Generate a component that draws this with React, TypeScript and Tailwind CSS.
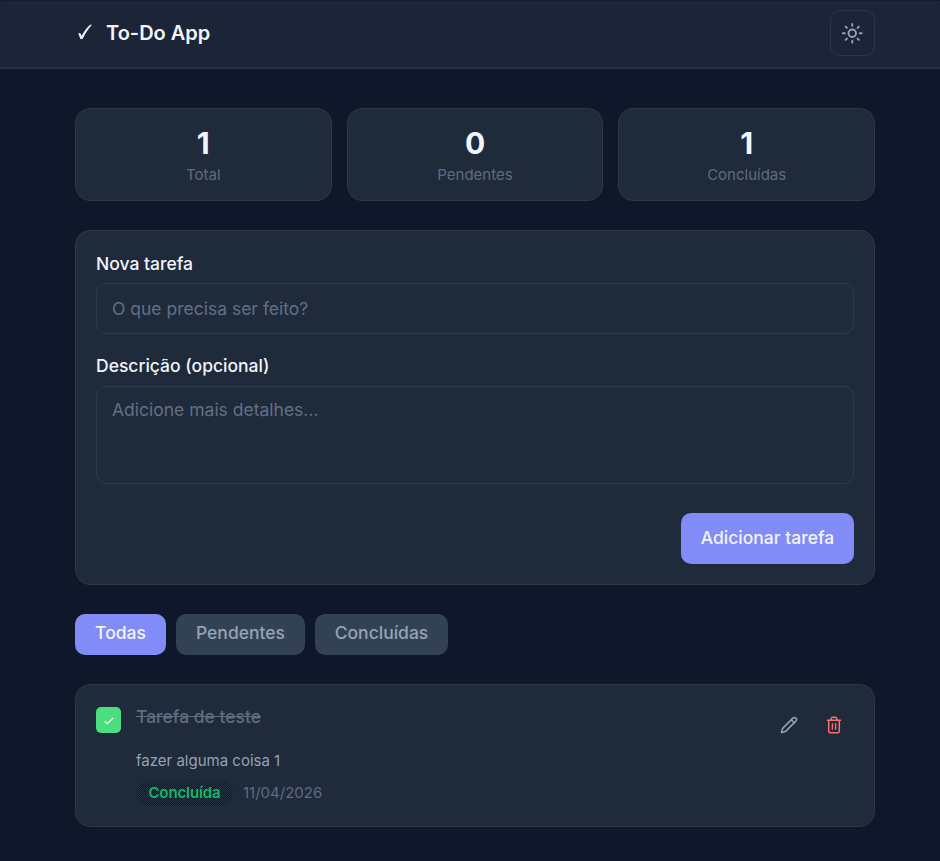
import React, { useState } from "react";
import { Pencil, Sun } from "lucide-react";

type Filter = "all" | "pending" | "done";

type Task = {
  id: number;
  title: string;
  description: string;
  date: string;
  done: boolean;
};

const initialTasks: Task[] = [
  {
    id: 1,
    title: "Tarefa de teste",
    description: "fazer alguma coisa 1",
    date: "11/04/2026",
    done: true,
  },
];

const filters: { id: Filter; label: string; width: string }[] = [
  { id: "all", label: "Todas", width: "w-[91px]" },
  { id: "pending", label: "Pendentes", width: "w-[129px]" },
  { id: "done", label: "Concluídas", width: "w-[133px]" },
];

function TrashIcon() {
  return (
    <svg
      viewBox="0 0 18 18"
      className="h-[18px] w-[18px]"
      fill="none"
      stroke="currentColor"
      strokeWidth="1.5"
      strokeLinecap="round"
      strokeLinejoin="round"
    >
      <path d="M2.500 4.200h13M3.700 4.200v11.100c0 .9.600 1.500 1.500 1.500h7.600c.9 0 1.500-.6 1.500-1.500V4.200" />
      <path d="M5.900 4.200l.6-2.100c.2-.6.600-.9 1.200-.9h2.600c.6 0 1 .3 1.200.9l.6 2.100" />
      <path d="M7.400 7.700v5.600M10.600 7.700v5.600" strokeWidth="1.400" />
    </svg>
  );
}

function Header() {
  return (
    <header className="h-[69px] border-t border-b-2 border-t-[#0f172a] border-b-[#243044] bg-[#1c2537] [border-top-style:dotted]">
      <div className="ml-[75px] flex h-[64px] w-[800px] items-center justify-between">
        <h1 className="flex items-center text-[20px] font-semibold leading-[30px]">
          <svg viewBox="0 0 16 18" className="mr-[13px] mb-[2px] ml-[2px] h-[18px] w-[16px]">
            <path
              d="M1.300 10.500c1.100-.8 2-.7 2.500.4l.8 2C6.900 8.600 9.700 4.700 13 1.700h1.900C11.300 5.900 8.200 10.600 5.900 15.400c-.7.8-1.600.9-2.500.7z"
              fill="currentColor"
            />
          </svg>
          To-Do App
        </h1>
        <button
          type="button"
          aria-label="Alternar tema"
          className="flex h-[46px] w-[45px] items-center justify-center rounded-[10px] border border-[#2a374a] text-[#94a3b8]"
        >
          <Sun size={22.5} strokeWidth={2} />
        </button>
      </div>
    </header>
  );
}

function StatCard({ value, label }: { value: number; label: string }) {
  return (
    <div className="flex h-[93px] flex-col items-center rounded-[15px] border border-[#2c394b] bg-[#1f2a3b] pt-4">
      <span className="text-[30px] font-bold leading-[37px]">{value}</span>
      <span className="mt-[2px] text-[15px] leading-[22px] text-[#5e6c80]">{label}</span>
    </div>
  );
}

function TaskForm() {
  return (
    <form
      onSubmit={(e) => e.preventDefault()}
      className="mt-[29px] flex h-[355px] flex-col rounded-[15px] border border-[#2c394b] bg-[#1f2a3b] px-5 pt-[21px]"
    >
      <label htmlFor="title" className="text-[17.5px] font-medium leading-[24px]">
        Nova tarefa
      </label>
      <input
        id="title"
        placeholder="O que precisa ser feito?"
        className="mt-[7px] h-[51px] rounded-[10px] border border-[#2e3b4e] px-[15px] text-[17.5px] outline-none placeholder:text-[#627085]"
      />
      <label htmlFor="description" className="mt-5 text-[17.5px] font-medium leading-[24px]">
        Descrição (opcional)
      </label>
      <textarea
        id="description"
        placeholder="Adicione mais detalhes..."
        className="mt-2 h-[98px] resize-none rounded-[10px] border border-[#2e3b4e] px-[15px] pt-[10px] text-[17.5px] leading-[26px] outline-none placeholder:text-[#627085]"
      />
      <button
        type="submit"
        className="mt-[29px] h-[51px] w-[173px] self-end rounded-[10px] bg-[#818cf8] pb-px text-[17.5px] font-medium"
      >
        Adicionar tarefa
      </button>
    </form>
  );
}

function TaskItem({ task, onToggle }: { task: Task; onToggle: () => void }) {
  return (
    <li className="flex h-[143px] rounded-[15px] border border-[#2c394b] bg-[#1f2a3b] px-5">
      <button
        type="button"
        onClick={onToggle}
        aria-label="Concluir tarefa"
        className={`mt-[22px] flex h-[26px] w-[25px] items-center justify-center rounded-[5px] ${task.done ? "bg-[#4ade80]" : "border border-[#334155]"}`}
      >
        {task.done && (
          <svg viewBox="0 0 10 8" className="mt-px h-2 w-2.5" fill="none">
            <path d="M.8 4.300l2.500 2.500L9.200.9" stroke="#f1f5f9" strokeWidth="1.25" />
          </svg>
        )}
      </button>

      <div className="ml-[15px] flex-1 pt-[19px]">
        <h3
          className={`text-[17.5px] font-medium leading-[26px] ${task.done ? "text-[#5e6c80] line-through" : ""}`}
        >
          {task.title}
        </h3>
        <p className="mt-[19px] text-[15px] leading-[23px] text-[#94a3b8]">
          {task.description}
        </p>
        <div className="mt-2 flex items-center">
          <span className="flex h-[26px] w-[97px] items-center justify-center rounded-full bg-[repeating-conic-gradient(#0f1929_0%_25%,#273446_0%_50%)] bg-[length:2px_2px] text-[15px] font-semibold leading-[24px] tracking-[-0.1px] text-[#10b962]">
            Concluída
          </span>
          <span className="ml-[10px] pb-px text-[15px] leading-[23px] text-[#5e6c80]">
            {task.date}
          </span>
        </div>
      </div>

      <div className="mr-[11px] flex gap-[27px] pt-[31px]">
        <button type="button" aria-label="Editar" className="h-[18px] text-[#94a3b8]">
          <Pencil size={18} strokeWidth={2} />
        </button>
        <button type="button" aria-label="Excluir" className="h-[18px] text-[#f87171]">
          <TrashIcon />
        </button>
      </div>
    </li>
  );
}

export default function App() {
  const [tasks, setTasks] = useState<Task[]>(initialTasks);
  const [filter, setFilter] = useState<Filter>("all");

  const done = tasks.filter((t) => t.done).length;
  const visible = tasks.filter(
    (t) => filter === "all" || t.done === (filter === "done")
  );

  const toggle = (id: number) =>
    setTasks(tasks.map((t) => (t.id === id ? { ...t, done: !t.done } : t)));

  return (
    <div className="h-[861px] overflow-hidden bg-[#0f172a] font-['Inter',sans-serif] text-[#f1f5f9]">
      <Header />
      <main className="ml-[75px] w-[800px] pt-[39px]">
        <section className="grid grid-cols-3 gap-[15px]">
          <StatCard value={tasks.length} label="Total" />
          <StatCard value={tasks.length - done} label="Pendentes" />
          <StatCard value={done} label="Concluídas" />
        </section>

        <TaskForm />

        <div className="mt-[29px] flex gap-[10px]">
          {filters.map((f) => (
            <button
              key={f.id}
              type="button"
              onClick={() => setFilter(f.id)}
              className={`h-[41px] rounded-[10px] pb-[2px] text-[17.5px] font-medium ${f.width} ${
                filter === f.id ? "bg-[#818cf8]" : "bg-[#334155] text-[#94a3b8]"
              }`}
            >
              {f.label}
            </button>
          ))}
        </div>

        <ul className="mt-[29px]">
          {visible.map((task) => (
            <TaskItem key={task.id} task={task} onToggle={() => toggle(task.id)} />
          ))}
        </ul>
      </main>
    </div>
  );
}
